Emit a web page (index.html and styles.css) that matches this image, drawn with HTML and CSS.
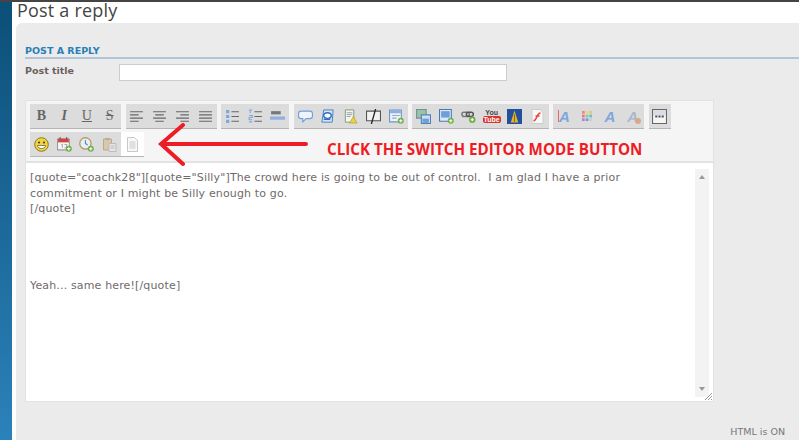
FILE: index.html
```html
<!DOCTYPE html>
<html lang="en">
<head>
  <meta charset="UTF-8" />
  <title>Post a reply</title>
  <link rel="stylesheet" href="styles.css">
</head>
<body>
  <div class="top-line"></div>
  <div class="page">
    <div class="side-strip"></div>
    <div class="main">
      <h1>Post a reply</h1>
      <div class="panel">
        <h2>POST A REPLY</h2>
        <div class="title-row">
          <label>Post title</label>
          <div class="title-input"></div>
        </div>

        <div class="editor">
          <div class="toolbar">
            <div class="tool-row">
              <div class="group">
                <span class="btn fmt bold">B</span>
                <span class="btn fmt ital">I</span>
                <span class="btn fmt under">U</span>
                <span class="btn fmt strike">S</span>
              </div>
              <div class="group">
                <span class="btn"><svg viewBox="0 0 14 12"><path d="M1 1.500h12M1 4.500h8M1 7.500h12M1 10.500h8" stroke="#666" fill="none"/></svg></span>
                <span class="btn"><svg viewBox="0 0 14 12"><path d="M1 1.500h12M3 4.500h8M1 7.500h12M3 10.500h8" stroke="#666" fill="none"/></svg></span>
                <span class="btn"><svg viewBox="0 0 14 12"><path d="M1 1.500h12M5 4.500h8M1 7.500h12M5 10.500h8" stroke="#666" fill="none"/></svg></span>
                <span class="btn"><svg viewBox="0 0 14 12"><path d="M1 1.500h12M1 4.500h12M1 7.500h12M1 10.500h12" stroke="#666" fill="none"/></svg></span>
              </div>
              <div class="group">
                <span class="btn"><svg viewBox="0 0 14 12"><path d="M1 0h3v3H1zM1 4.500h3v3H1zM1 9h3v3H1z" fill="#7ea6dc"/><path d="M6 1.500h7M6 6h7M6 10.500h7" stroke="#666" fill="none"/></svg></span>
                <span class="btn"><svg viewBox="0 0 14 14"><path d="M1 1h3M2 1v3M1 6h3v2H1v2h3M1 12h3" stroke="#7ea6dc" fill="none"/><path d="M6 2.500h7M6 7h7M6 11.500h7" stroke="#666" fill="none"/></svg></span>
                <span class="btn"><svg viewBox="0 0 14 12"><path d="M1 1h9v3H1z" fill="#777"/><path d="M0 6h14v3H0z" fill="#8fb0e0"/></svg></span>
              </div>
              <div class="group">
                <span class="btn"><svg viewBox="0 0 14 14"><path d="M3 2h8q2.500 0 2.500 2.500v2q0 2.500-2.500 2.500H7.500l-3 3V9H3Q.5 9 .5 6.500v-2Q.5 2 3 2z" fill="#eef4fc" stroke="#6f9fd8"/></svg></span>
                <span class="btn"><svg viewBox="0 0 14 16"><path d="M3 1h10l-1 13H1z" fill="#d6e6f8" stroke="#3f7fc6"/><ellipse cx="7" cy="7" rx="4" ry="3" fill="#fff" stroke="#2f6fc0" stroke-width="1.500"/><path d="M3 11h7" stroke="#2f6fc0" stroke-width="1.500"/></svg></span>
                <span class="btn"><svg viewBox="0 0 14 16"><path d="M1.500 1h9v13h-9z" fill="#f4f7ee" stroke="#7f9a78"/><path d="M3 4h6M3 6h6M3 8h4" stroke="#99a"/><path d="M10 8l4 7H6z" fill="#ecd23c" stroke="#a98f20" stroke-width=".6"/></svg></span>
                <span class="btn"><svg viewBox="0 0 14 14"><path d="M.5 2h13v9H.5z" fill="#f2f2f2" stroke="#555"/><path d="M9 0L5 14" stroke="#222" stroke-width="1.200"/></svg></span>
                <span class="btn"><svg viewBox="0 0 14 14"><path d="M.5 1h11v11H.5z" fill="#eaf1fa" stroke="#6f94c4"/><path d="M1 1h10v3H1z" fill="#8fb0e0"/><path d="M3 6h7M3 8.500h4" stroke="#9ab"/><circle cx="11" cy="11" r="2.800" fill="#6fb04c"/><path d="M9.500 11h3M11 9.500v3" stroke="#fff"/></svg></span>
              </div>
              <div class="group">
                <span class="btn"><svg viewBox="0 0 14 14"><path d="M.5.500h9v8h-9z" fill="#9cc49a" stroke="#6f8fb0"/><path d="M5 5.500h8.500v8H5z" fill="#cfe0f4" stroke="#4f82bd"/><path d="M6 9h6v4H6z" fill="#6f9fd8"/></svg></span>
                <span class="btn"><svg viewBox="0 0 14 14"><path d="M.5.500h11v11H.5z" fill="#dfe9f6" stroke="#4a78b4"/><path d="M2 2h8v6H2z" fill="#6f9fd8"/><circle cx="11" cy="11" r="2.800" fill="#6fb04c"/><path d="M9.500 11h3M11 9.500v3" stroke="#fff"/></svg></span>
                <span class="btn"><svg viewBox="0 0 14 14"><rect x=".8" y="3" width="7" height="4" rx="2" fill="none" stroke="#777" stroke-width="1.400"/><rect x="5" y="3" width="6.500" height="4" rx="2" fill="none" stroke="#555" stroke-width="1.400"/><circle cx="10.500" cy="10" r="3" fill="#6fb04c"/><path d="M9 10h3M10.500 8.500v3" stroke="#fff"/></svg></span>
                <span class="btn yt"><span class="yt-you">You</span><span class="yt-tube">Tube</span></span>
                <span class="btn"><svg viewBox="0 0 14 14"><path d="M0 0h14v14H0z" fill="#23509c"/><path d="M7 1.500l3.500 11h-7z" fill="#e3b52a"/><path d="M7 5v7" stroke="#8a6a10"/></svg></span>
                <span class="btn"><svg viewBox="0 0 14 15"><path d="M1.500.500h8l3 3v11h-11z" fill="#f7f7f7" stroke="#ccc"/><path d="M10 4c-4 0-3 7-7 8M5 7h4" stroke="#e8453c" stroke-width="1.500" fill="none"/></svg></span>
              </div>
              <div class="group">
                <span class="btn font-a"><i class="side-bar"></i>A</span>
                <span class="btn"><svg class="swatches" viewBox="0 0 11 11"><path d="M0 0h3v3H0z" fill="#e88"/><path d="M4 0h3v3H4z" fill="#ec9"/><path d="M8 0h3v3H8z" fill="#dc6"/><path d="M0 4h3v3H0z" fill="#e77"/><path d="M4 4h3v3H4z" fill="#8c8"/><path d="M8 4h3v3H8z" fill="#6bc"/><path d="M0 8h3v3H0z" fill="#a8c"/><path d="M4 8h3v3H4z" fill="#79d"/><path d="M8 8h3v3H8z" fill="#ccc"/></svg></span>
                <span class="btn font-a">A</span>
                <span class="btn font-a faded">A<i class="clear-dot"></i></span>
              </div>
              <div class="group">
                <span class="btn"><svg viewBox="0 0 14 14"><path d="M.5.500h13v13H.5z" fill="#f5f5f5" stroke="#666"/><path d="M1 1h12v5H1z" fill="#d9dde6"/><path d="M3 6h2v2H3zM6 6h2v2H6zM9 6h2v2H9z" fill="#555"/></svg></span>
              </div>
            </div>
            <div class="tool-row">
              <div class="group">
                <span class="btn"><svg viewBox="0 0 15 15"><circle cx="7.500" cy="7.500" r="6.800" fill="#f2d33a" stroke="#8d7a20"/><circle cx="5" cy="5.500" r="1" fill="#333"/><circle cx="10" cy="5.500" r="1" fill="#333"/><path d="M3.500 8.500h8c0 4-8 4-8 0z" fill="#fff" stroke="#555" stroke-width=".7"/></svg></span>
                <span class="btn"><svg viewBox="0 0 14 14"><path d="M.5 2h11v10H.5z" fill="#f6f6f6" stroke="#999"/><path d="M1 1.500h10V5H1z" fill="#d8423c"/><path d="M3 0v3M9 0v3" stroke="#666"/><path d="M4 7h1v3M7 7h2v3H7" stroke="#aaa" fill="none"/><circle cx="11" cy="11" r="2.800" fill="#6fb04c"/><path d="M9.500 11h3M11 9.500v3" stroke="#fff"/></svg></span>
                <span class="btn"><svg viewBox="0 0 14 14"><circle cx="6" cy="6" r="5.300" fill="#e6eef6" stroke="#b79a60" stroke-width="1.200"/><path d="M6 3v3l2 1.500" stroke="#4f82bd" fill="none"/><circle cx="11" cy="11" r="2.800" fill="#6fb04c"/><path d="M9.500 11h3M11 9.500v3" stroke="#fff"/></svg></span>
                <span class="btn"><svg viewBox="0 0 14 15"><path d="M1 2h8v11H1z" fill="#d8c9ae" stroke="#b9aa90"/><path d="M3 1h4v2H3z" fill="#b9aa90"/><path d="M6.500 6.500h7v8h-7z" fill="#e6e6e6" stroke="#bbb"/><path d="M8 9h4M8 11h4" stroke="#bbb"/></svg></span>
                <span class="btn active"><svg viewBox="0 0 12 15"><path d="M1 .500h7l3 3v11H1z" fill="#f8f8f8" stroke="#c8c8c8"/><path d="M3 5h6M3 7h6M3 9h6M3 11h6" stroke="#c8c8c8"/></svg></span>
              </div>
            </div>
          </div>

          <div class="text-area">
            <div class="text-body">
              <p>[quote="coachk28"][quote="Silly"]The crowd here is going to be out of control.&nbsp; I am glad I have a prior commitment or I might be Silly enough to go.<br>[/quote]</p>
              <p class="reply-line">Yeah... same here![/quote]</p>
            </div>
            <div class="scrollbar">
              <span class="arrow up"></span>
              <span class="arrow down"></span>
            </div>
            <svg class="grip" viewBox="0 0 7 7"><path d="M0 7l7-7M3 7l4-4M6 7l1-1" stroke="#999" fill="none"/></svg>
          </div>
        </div>

        <div class="status-list">HTML is ON</div>
      </div>
    </div>
  </div>

  <!-- annotation drawn over the editor -->
  <svg class="arrow-note" viewBox="0 0 150 44">
    <path d="M148 21H3M25 2L3 21l22 20" stroke="#ee1c25" stroke-width="4" stroke-linecap="round" fill="none"/>
  </svg>
  <div class="note-text">CLICK THE SWITCH EDITOR MODE BUTTON</div>
</body>
</html>
```

FILE: styles.css
```css
* {
  margin: 0;
  padding: 0;
  box-sizing: border-box;
}

html, body {
  width: 799px;
  height: 440px;
  overflow: hidden;
  background: white;
}

body {
  position: relative;
  font-family: "DejaVu Sans", sans-serif;
}

.top-line {
  height: 2px;
  background: #444;
}

.page {
  display: flex;
  height: 438px;
}

.side-strip {
  width: 12px;
  background: linear-gradient(#0c4f78, #2b82ba);
}

.main {
  display: flex;
  flex-direction: column;
  flex: 1;
  padding-left: 4px;
  min-width: 0;
}

h1 {
  height: 21px;
  padding-left: 1px;
  font-family: "Open Sans", sans-serif;
  font-size: 18px;
  font-weight: normal;
  line-height: 16px;
  letter-spacing: 0.2px;
  color: #444;
}

.panel {
  flex: 1;
  padding: 22px 0 0 9px;
  background: #ebebeb;
  border-top-left-radius: 6px;
}

h2 {
  height: 13px;
  font-size: 9.500px;
  line-height: 12px;
  font-weight: bold;
  color: #2a7fb8;
  border-bottom: 1px solid #b0c4da;
  box-shadow: 0 1px 0 #b0c4da;
}

.title-row {
  display: flex;
  margin-top: 6px;
}

.title-row label {
  width: 94px;
  font-size: 9.500px;
  font-weight: bold;
  line-height: 14px;
  color: #6b5f5f;
}

.title-input {
  width: 388px;
  height: 17px;
  background: white;
  border: 1px solid #ccc;
}

.editor {
  width: 689px;
  height: 302px;
  margin-top: 19px;
  background: white;
  border: 1px solid #e2e2e2;
  display: flex;
  flex-direction: column;
}

.toolbar {
  height: 62px;
  padding: 3px 0 0 4px;
  background: #f5f5f5;
  border-bottom: 2px solid #e2e2e2;
}

.tool-row {
  display: flex;
  gap: 4.500px;
  margin-bottom: 3px;
}

.group {
  display: flex;
  height: 25px;
  background: #dcdcdc;
  border-bottom: 1px solid #b5b5b5;
}

.btn {
  position: relative;
  display: flex;
  flex-direction: column;
  align-items: center;
  justify-content: center;
  width: 22.750px;
  height: 24px;
}

.btn svg {
  width: 15px;
  height: 15px;
}

.btn svg.swatches {
  width: 10px;
  height: 10px;
}

.btn.active {
  background: white;
}

.fmt {
  font-family: "Liberation Serif", serif;
  font-size: 14px;
  font-weight: bold;
  color: #666;
}

.ital {
  font-style: italic;
}

.under {
  font-weight: normal;
  text-decoration: underline;
}

.strike {
  font-weight: normal;
  text-decoration: line-through;
}

.yt {
  font-family: "Liberation Sans", sans-serif;
  font-size: 7px;
  line-height: 7px;
  font-weight: bold;
}

.yt-you {
  color: #444;
}

.yt-tube {
  padding: 0 1px;
  color: white;
  background: #d8322c;
  border-radius: 2px;
}

.font-a {
  font-family: "Liberation Sans", sans-serif;
  font-size: 15px;
  font-weight: bold;
  font-style: italic;
  color: #7ea6dc;
}

.font-a.faded {
  color: #a8b8cc;
}

.side-bar {
  position: absolute;
  left: 5px;
  top: 6px;
  width: 1px;
  height: 12px;
  background: #e26a6a;
}

.clear-dot {
  position: absolute;
  right: 3px;
  bottom: 4px;
  width: 6px;
  height: 6px;
  border-radius: 50%;
  background: #d9a98c;
}

.text-area {
  position: relative;
  flex: 1;
  display: flex;
  padding: 6px 4px 4px 4px;
}

.text-body {
  flex: 1;
  padding: 1px 36px 0 0;
  font-size: 11px;
  line-height: 15.500px;
  letter-spacing: 0.150px;
  color: #706a6a;
}

.reply-line {
  margin-top: 61px;
}

.scrollbar {
  position: relative;
  width: 14px;
  background: #f3f3f3;
}

.arrow {
  position: absolute;
  left: 4px;
  width: 0;
  height: 0;
  border-left: 3px solid transparent;
  border-right: 3px solid transparent;
}

.arrow.up {
  top: 6px;
  border-bottom: 4px solid #999;
}

.arrow.down {
  bottom: 6px;
  border-top: 4px solid #999;
}

.grip {
  position: absolute;
  right: 1px;
  bottom: 1px;
  width: 7px;
  height: 7px;
}

.status-list {
  width: 760px;
  margin-top: 23px;
  font-size: 9.500px;
  line-height: 13px;
  text-align: right;
  color: #777;
}

.arrow-note {
  position: absolute;
  left: 158px;
  top: 123px;
  width: 150px;
  height: 44px;
}

.note-text {
  position: absolute;
  left: 327px;
  top: 140px;
  font-family: "Open Sans", sans-serif;
  font-size: 15.200px;
  line-height: 18px;
  font-weight: bold;
  color: #ee1c25;
}
```
